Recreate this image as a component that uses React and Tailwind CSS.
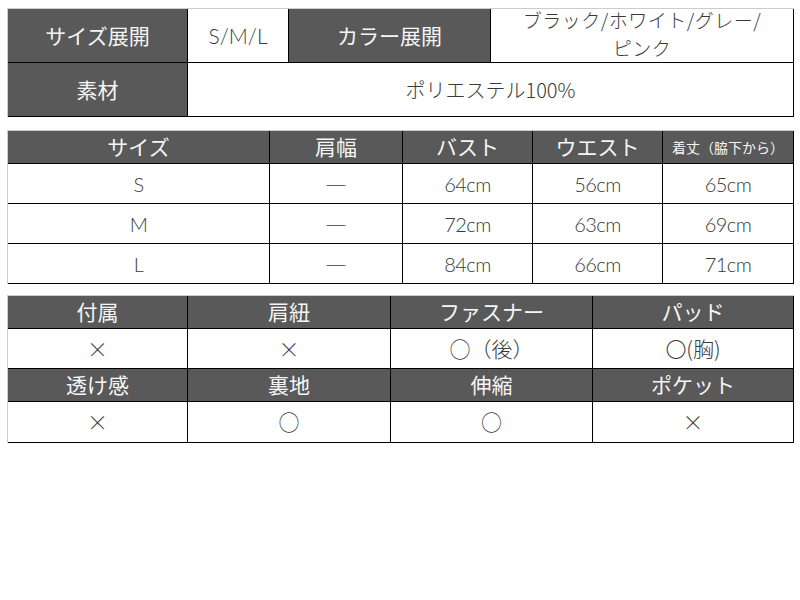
import React from 'react';

const jp = "font-['Noto_Sans_CJK_JP','Noto_Sans',sans-serif]";
const head = 'bg-[#595959] text-[#f5f5f5] flex items-center justify-center border-r border-b border-black';
const cell = 'bg-white text-[#3a3a3a] font-light flex items-center justify-center border-r border-b border-black';

const sizes = [
  ['S', '―', '64cm', '56cm', '65cm'],
  ['M', '―', '72cm', '63cm', '69cm'],
  ['L', '―', '84cm', '66cm', '71cm'],
];

function SpecTable() {
  return (
    <div className="grid grid-cols-[180px_101px_202px_1fr] grid-rows-[54px_54px] border-t border-l border-[#cccccc] w-[787px]">
      <div className={`${head} text-[21px]`}>サイズ展開</div>
      <div className={`${cell} text-[21px] font-['Lato',sans-serif]`}>S/M/L</div>
      <div className={`${head} text-[21px]`}>カラー展開</div>
      <div className={`${cell} pb-[3px]`}>
        <p className="text-[19px] leading-[28px] text-center tracking-[0.5px]">
          ブラック/ホワイト/グレー/
          <br />
          ピンク
        </p>
      </div>
      <div className={`${head} text-[21px]`}>素材</div>
      <div className={`${cell} col-span-3 text-[20px]`}>ポリエステル100%</div>
    </div>
  );
}

function SizeTable() {
  return (
    <div className="grid grid-cols-[262px_133px_130px_130px_1fr] grid-rows-[33px_40px_40px_40px] border-t border-l border-[#cccccc] w-[787px] mt-[13px]">
      <div className={`${head} text-[21px]`}>サイズ</div>
      <div className={`${head} text-[21px]`}>肩幅</div>
      <div className={`${head} text-[21px]`}>バスト</div>
      <div className={`${head} text-[21px]`}>ウエスト</div>
      <div className={`${head} text-[14px]`}>着丈（脇下から）</div>
      {sizes.map((row) =>
        row.map((v, i) =>
          i === 1 ? (
            <div key={row[0] + i} className={`${cell} text-[22px]`}>
              {v}
            </div>
          ) : (
            <div key={row[0] + i} className={`${cell} text-[20px] tracking-[-0.5px] font-['Lato',sans-serif]`}>
              {v}
            </div>
          )
        )
      )}
    </div>
  );
}

function DetailTable() {
  const rows = [
    [['付属', '肩紐', 'ファスナー', 'パッド'], ['×', '×', '○（後）', '〇(胸)']],
    [['透け感', '裏地', '伸縮', 'ポケット'], ['×', '○', '○', '×']],
  ];
  return (
    <div className="grid grid-cols-[180px_203px_202px_1fr] grid-rows-[33px_40px_33px_41px] border-t border-l border-[#cccccc] w-[787px] mt-[11px]">
      {rows.map(([labels, values], r) => (
        <React.Fragment key={r}>
          {labels.map((l) => (
            <div key={l} className={`${head} text-[21px]`}>
              {l}
            </div>
          ))}
          {values.map((v, i) => (
            <div key={i} className={`${cell} text-[21px]`}>
              {v}
            </div>
          ))}
        </React.Fragment>
      ))}
    </div>
  );
}

export default function App() {
  return (
    <div className={`w-[800px] h-[600px] bg-white pt-2 pl-[7px] ${jp}`}>
      <SpecTable />
      <SizeTable />
      <DetailTable />
    </div>
  );
}
